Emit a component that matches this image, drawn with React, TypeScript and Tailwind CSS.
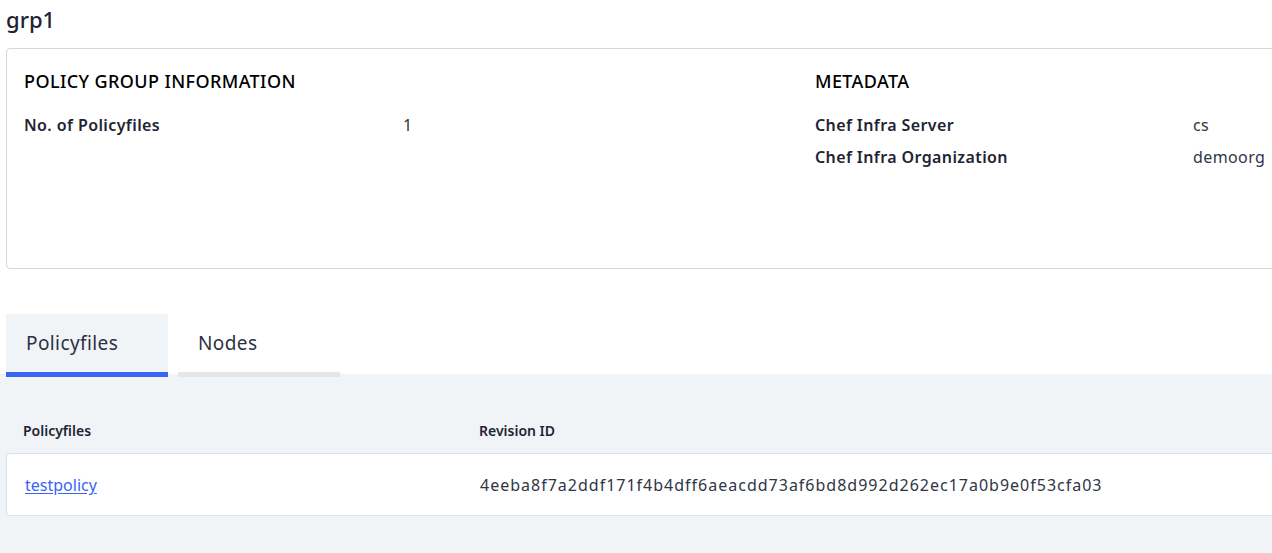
import React from "react";

export default function App() {
  return (
    <div className="w-[1272px] h-[553px] overflow-hidden bg-white text-[#1c1f2a] font-['Noto_Sans',sans-serif] tracking-[0.4px] flex flex-col">
      <div className="px-[6px]">
        <h1 className="h-[40px] leading-[38px] text-[22px] font-medium text-[#1f2433] tracking-normal">grp1</h1>
        <div className="mt-[8px] w-[1300px] h-[221px] border border-[#d6d6d6] rounded-[4px] pl-[17px] pt-[20px] flex">
          <section className="w-[791px]">
            <h2 className="text-[18px] leading-[24px] font-medium text-black">POLICY GROUP INFORMATION</h2>
            <div className="mt-[16px]">
              <div className="flex h-[32px] items-center text-[16px]">
                <span className="w-[379px] font-semibold text-[#1f2433]">No. of Policyfiles</span>
                <span className="text-[#2f3545]">1</span>
              </div>
            </div>
          </section>
          <section>
            <h2 className="text-[18px] leading-[24px] font-medium text-black">METADATA</h2>
            <div className="mt-[16px]">
              <div className="flex h-[32px] items-center text-[16px]">
                <span className="w-[378px] font-semibold text-[#1f2433]">Chef Infra Server</span>
                <span className="text-[#2f3545]">cs</span>
              </div>
              <div className="flex h-[32px] items-center text-[16px]">
                <span className="w-[378px] font-semibold text-[#1f2433]">Chef Infra Organization</span>
                <span className="text-[#2f3545]">demoorg</span>
              </div>
            </div>
          </section>
        </div>
        <div className="mt-[45px] flex gap-[10px] relative z-10 -mb-[3px]">
          <div className="w-[162px] h-[63px] bg-[#f1f4f7] border-b-[5px] border-[#3864f5] flex items-center pl-[20px] text-[19px] text-[#2b3142]">
            Policyfiles
          </div>
          <div className="w-[162px] h-[63px] bg-white border-b-[5px] border-[#e6e6e6] flex items-center pl-[20px] text-[19px] text-[#2b3142]">
            Nodes
          </div>
        </div>
      </div>
      <div className="flex-1 bg-[#f1f4f7] px-[6px] pt-[43px]">
        <div className="w-[1300px] h-[26px] flex items-center pl-[17px] text-[14px] font-semibold text-[#1f2433] tracking-normal">
          <span className="w-[456px]">Policyfiles</span>
          <span>Revision ID</span>
        </div>
        <div className="mt-[10px] w-[1300px] h-[63px] bg-white border border-[#dde1e6] rounded-[4px] flex items-center pl-[18px] text-[16px]">
          <a href="#" className="w-[455px] text-[#3864f5] underline underline-offset-2 tracking-normal">testpolicy</a>
          <span className="text-[#2f3545] tracking-[1px]">4eeba8f7a2ddf171f4b4dff6aeacdd73af6bd8d992d262ec17a0b9e0f53cfa03</span>
        </div>
      </div>
    </div>
  );
}
